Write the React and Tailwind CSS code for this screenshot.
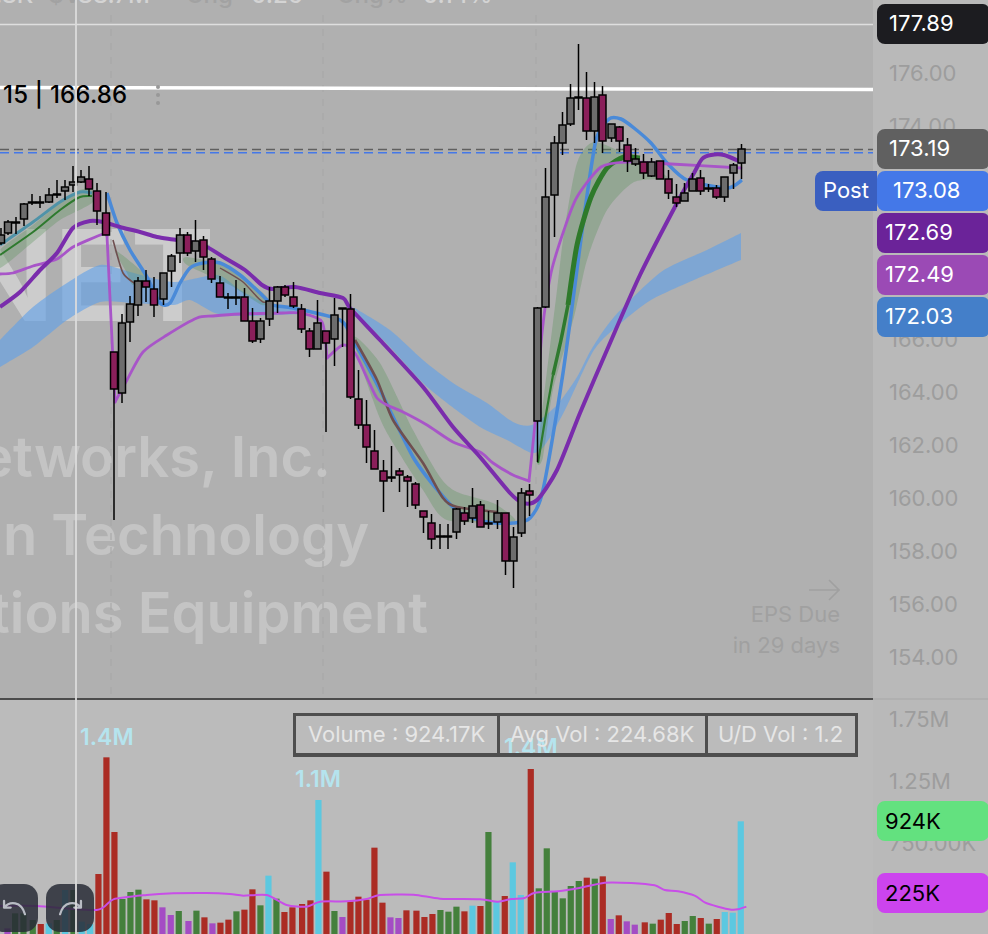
const font = { fontFamily: 'Inter, "Liberation Sans", sans-serif' }

const UP = '#6d6d6d'
const DOWN = '#8a1f5a'

// x, high, top, bottom, low, up?
const CANDLES = [
  [1,228,235,243,245,1],[8,220,222,233,235,1],[16,217,222,223,234,1],[24,203,204,219,226,1],[32,194,202,203,205,1],
  [40,196,202,203,208,1],[49,188,195,202,203,1],[57,180,194,195,198,1],[65,180,187,191,200,1],[73,166,182,185,192,1],
  [81,170,177,182,183,1],[89,166,179,189,196,0],[97,183,191,211,225,0],[106,192,213,235,235,0],[114,352,352,389,520,0],
  [122,314,323,393,403,1],[130,296,304,322,342,1],[138,277,281,305,316,1],[146,270,281,287,302,0],[154,277,289,305,317,0],
  [163.5,273,273,299,305,1],[171.5,254,256,271,287,1],[180,228,235,253,263,1],[187.5,232,235,253,256,0],[195.5,220,241,251,262,1],
  [203.5,236,240,257,270,0],[211.5,257,259,279,283,0],[220,276,283,297,297,0],[228,293,297,298,309,1],[236,280,297,298,305,1],
  [244.5,288,297,321,321,0],[252.5,308,321,341,343,0],[260.5,318,321,339,343,1],[269.5,287,301,319,326,1],[277.5,286,287,301,313,1],
  [285,285,287,295,297,0],[293.5,282,297,306,308,0],[301.5,304,309,329,333,0],[309.5,328,331,349,357,0],[317.5,300,323,349,349,1],
  [326,331,331,343,432,0],[334.5,298,315,339,366,1],[342.5,308,308,309,347,1],[350.5,294,309,397,399,0],[358.5,370,399,425,429,0],
  [366.5,400,425,447,463,0],[374.5,430,451,469,469,0],[383.5,460,471,481,512,0],[391.5,446,477,478,482,1],[399.5,468,471,475,492,0],
  [407.5,475,477,481,507,0],[415.5,482,484,505,509,0],[423.5,511,511,517,533,0],[431.5,514,523,539,549,0],[440,524,536,537,549,1],
  [448,524,536,537,549,1],[456.5,508,509,532,539,1],[464.5,507,513,521,525,0],[472.5,488,506,518,523,1],[480.5,501,505,527,527,0],
  [488.5,511,523,524,529,1],[497.5,500,513,522,529,1],[505.5,513,513,561,575,0],[513.5,527,537,561,588,1],[521.5,488,493,533,537,1],
  [529.5,484,491,495,516,0],[537.5,307,308,421,462,1],[545.5,168,197,307,308,1],[554.5,136,143,195,237,1],[562.5,112,125,143,155,1],
  [570.5,84,98,124,126,1],[578.5,44,97,98,110,1],[586.5,72,98,131,140,0],[594.5,82,97,131,143,1],[602.5,86,95,141,153,0],
  [611.5,124,124,138,142,1],[619.5,126,127,141,152,0],[627.5,138,145,161,172,0],[635.5,148,159,164,166,1],[643.5,154,162,173,179,0],
  [651.5,158,162,176,177,1],[660,161,161,179,179,0],[668.5,170,179,193,199,0],[676.5,184,197,203,207,0],[684.5,183,193,201,201,1],
  [692.5,173,179,191,191,1],[700.5,170,178,191,195,0],[708.5,184,188,189,192,1],[716.5,185,188,197,199,0],[724.5,177,177,197,202,1],
  [733.5,163,165,173,189,1],[741.5,144,149,163,179,1],
]

// catmull-rom through the points, kept tight so lines don't overshoot
const smooth = (a, closed = false) => {
  const at = i => closed ? a[(i + a.length) % a.length] : a[Math.max(0, Math.min(a.length - 1, i))]
  const n = closed ? a.length : a.length - 1
  let d = `M${a[0][0]},${a[0][1]}`
  for (let i = 0; i < n; i++) {
    const [p0, p1, p2, p3] = [at(i - 1), at(i), at(i + 1), at(i + 2)]
    const c1 = [p1[0] + (p2[0] - p0[0]) / 8, p1[1] + (p2[1] - p0[1]) / 8]
    const c2 = [p2[0] - (p3[0] - p1[0]) / 8, p2[1] - (p3[1] - p1[1]) / 8]
    d += ` C${c1[0]},${c1[1]} ${c2[0]},${c2[1]} ${p2[0]},${p2[1]}`
  }
  return closed ? d + ' Z' : d
}
// two smooth edges joined with hard corners
const band = (top, bot) => smooth(top) + ' L' + smooth(bot).slice(1) + ' Z'

const DARK_PURPLE = [[0,307],[20,292],[40,270],[57,253],[73,228],[90,221],[103,222],[120,227],[140,232],[157,237],[177,240],[203,245],[225,258],[245,270],[262,285],[272,289],[295,287],[320,293],[343,298],[350,308],[380,340],[423,387],[453,427],[480,457],[510,493],[523,503],[537,500],[557,470],[580,413],[607,350],[640,275],[677,203],[694,173],[702,159],[711,155],[724,155],[741,162]]
const LIGHT_PURPLE = [
  [[0,274],[13,273],[33,266],[57,259],[73,247],[103,234],[107,236]],
  [[107,236],[115,402]],
  [[115,402],[127,380],[143,352],[167,335],[197,318],[213,316],[240,314],[283,313],[300,313],[322,322],[327,358]],
  [[327,358],[343,345],[355,353],[368,380],[377,398],[387,405],[403,412],[427,425],[453,442],[480,452],[493,463],[513,475],[529,481]],
  [[529,481],[535,423],[542,333],[551,273],[564,230],[577,197],[601,167],[627,162],[671,164],[741,168]],
]
const BLUE_A = [[107,193],[117,223],[130,250],[147,277],[160,303],[170,303],[180,283],[190,268],[203,263],[220,263],[240,275],[260,293],[273,305],[293,308],[340,320],[353,340],[380,390],[413,457],[440,493],[460,513],[487,522],[513,523],[530,518],[543,490],[563,373],[584,217],[596,140],[609,119],[621,119],[634,128],[651,143],[667,163],[687,180],[727,188],[742,180]]
const BLUE_LEFT = [[0,245],[33,222],[60,202],[80,192],[92,193]]
const GREEN_LEFT = [[0,255],[33,232],[60,210],[80,197],[92,196]]
const GREEN_THIN = [[538,463],[545,420],[553,375]]
const GREEN_MID = [[553,375],[561,340],[568,305]]
const GREEN_THICK = [[568,305],[577,245],[591,197],[607,168],[624,157],[640,158]]
const BROWN_A = [[355,340],[377,380],[393,420],[423,463],[443,498],[457,507],[497,512]]
const BROWN_B = [[113,240],[123,273],[137,285]]
const BROWN_C = [[220,268],[243,282],[263,302],[280,298]]

const BLUE_WIDE = band(
  [[353,307],[390,330],[423,360],[453,383],[487,403],[513,422],[532,425],[557,405],[577,377],[591,350],[614,317],[661,272],[707,250],[741,233]],
  [[741,260],[694,280],[651,300],[621,323],[594,350],[565,410],[545,445],[532,453],[507,440],[480,427],[447,403],[423,383],[390,347],[363,320]],
)
const BLUE_LEFT_BAND = band(
  [[0,340],[33,307],[67,283],[100,265],[130,272],[173,282],[217,275],[240,290],[270,305],[300,308]],
  [[300,314],[240,316],[215,313],[190,300],[173,305],[133,303],[100,302],[67,320],[33,347],[0,367]],
)
const BANDS_GREEN = [
  [[0,250],[33,225],[60,203],[80,190],[92,190],[92,203],[60,220],[33,242],[0,268]],
  [[115,250],[147,277],[133,285],[127,273]],
  [[187,257],[230,268],[267,297],[262,305],[230,285],[187,265]],
  [[353,337],[380,363],[413,430],[440,477],[457,492],[493,503],[513,517],[510,522],[447,520],[423,490],[387,433],[373,400]],
  [[537,463],[540,430],[557,290],[564,233],[577,163],[594,142],[627,155],[667,177],[634,182],[607,210],[587,260],[574,317],[553,390],[543,457]],
]

// zoom x, zoom top, colour (picture coords times 3)
const R = '#ab2c24', G = '#44803c', P = '#a44cc4', C = '#5cc8e0'
const VOLS = [
  [22,685,P],[45,640,G],[70,640,G],[98,660,G],[122,672,R],[146,670,C],[170,660,G],[195,570,C],[220,570,G],[245,665,C],[270,672,C],
  [295,522,R],[319,172,R],[343,396,R],[367,597,G],[391,576,G],[415,569,G],[439,598,R],[463,601,R],[487,622,P],[512,645,P],[536,633,G],
  [565,663,P],[589,632,G],[613,652,R],[637,670,P],[661,668,R],[685,659,R],[709,634,G],[733,629,R],[757,568,R],[781,616,G],[805,527,C],
  [829,596,G],[853,636,R],[877,622,R],[906,612,R],[931,601,R],[955,300,C],[979,515,R],[1003,633,G],[1027,651,P],[1051,604,R],[1075,590,R],
  [1099,599,R],[1123,443,R],[1147,608,R],[1171,652,P],[1195,654,P],[1219,631,R],[1249,632,R],[1273,651,R],[1297,642,R],[1321,630,G],
  [1345,635,G],[1369,620,G],[1393,634,R],[1417,617,C],[1441,618,R],[1465,396,G],[1489,605,C],[1514,588,R],[1538,487,C],[1562,585,C],
  [1592,207,R],[1616,565,G],[1640,445,G],[1664,575,G],[1688,595,G],[1712,558,G],[1736,543,G],[1760,533,R],[1784,536,G],[1808,529,R],
  [1832,657,P],[1856,646,R],[1880,664,P],[1904,674,P],[1934,667,R],[1958,671,G],[1982,659,R],[2006,639,R],[2030,672,R],[2054,663,G],
  [2078,648,G],[2102,654,R],[2126,671,G],[2150,657,R],[2174,636,C],[2198,638,C],[2222,364,C],
]
const AVG = [[0,618],[110,618],[290,630],[340,598],[440,585],[520,580],[620,579],[690,582],[730,587],[800,585],[860,615],[920,620],[960,605],[1040,604],[1100,597],[1140,585],[1240,584],[1320,596],[1440,598],[1494,605],[1534,597],[1574,594],[1604,578],[1674,574],[1734,565],[1814,548],[1894,549],[1964,556],[1994,570],[2034,574],[2084,587],[2114,607],[2154,620],[2194,629],[2214,628],[2239,620]]

const TICKS = ['176.00','174.00','172.00','170.00','168.00','166.00','164.00','162.00','160.00','158.00','156.00','154.00']

function PriceTag({ top, bg, pad = 'pl-3', children }) {
  return (
    <div className={`absolute left-[4px] w-[112px] h-10 rounded-l-lg rounded-r-md flex items-center text-white pb-[1px] ${pad}`} style={{ top, background: bg }}>
      {children}
    </div>
  )
}

function ChartSvg() {
  return (
    <svg className="absolute inset-0" width="873" height="699" viewBox="0 0 873 699" fill="none">
      {[111, 323, 536].map(x => (
        <line key={x} x1={x} y1="15" x2={x} y2="699" stroke="#a8a8a8" strokeOpacity=".75" strokeWidth="1.5" strokeDasharray="7 7" />
      ))}
      <line x1="0" y1="24.5" x2="873" y2="24.5" stroke="#dedede" strokeWidth="1.5" />
      <line x1="0" y1="87.5" x2="873" y2="89.5" stroke="#ffffff" strokeWidth="3.5" />
      <line x1="0" y1="149.5" x2="873" y2="149.5" stroke="#5f5f5f" strokeWidth="1.6" strokeDasharray="9 5" />
      <line x1="0" y1="152.7" x2="873" y2="152.7" stroke="#4478e8" strokeWidth="1.6" strokeDasharray="9 5" />

      <path d={BLUE_LEFT_BAND} fill="#5f9fe8" fillOpacity=".62" />
      <path d={BLUE_WIDE} fill="#5f9fe8" fillOpacity=".62" />
      {BANDS_GREEN.map((b, i) => <path key={i} d={smooth(b, true)} fill="#4f8f4f" fillOpacity=".3" />)}

      <path d={smooth(GREEN_LEFT)} stroke="#2e7a2e" strokeWidth="2" />
      <path d={smooth(BLUE_LEFT)} stroke="#4f93a8" strokeWidth="3" />
      <path d={smooth(BLUE_A)} stroke="#4a8ad8" strokeWidth="3.5" />
      <path d={smooth(GREEN_THIN)} stroke="#2e7a2e" strokeWidth="2.2" />
      <path d={smooth(GREEN_MID)} stroke="#2e7a2e" strokeWidth="3.5" />
      <path d={smooth(GREEN_THICK)} stroke="#2e7a2a" strokeWidth="5" />
      <path d={smooth(BROWN_A)} stroke="#6f4f50" strokeWidth="2.6" />
      <path d={smooth(BROWN_B)} stroke="#6f4f50" strokeWidth="1.6" />
      <path d={smooth(BROWN_C)} stroke="#6f4f50" strokeWidth="1.4" />
      {LIGHT_PURPLE.map((s, i) => <path key={i} d={smooth(s)} stroke="#a855c8" strokeWidth="2.8" strokeLinecap="round" />)}
      <path d={smooth(DARK_PURPLE)} stroke="#7a2cac" strokeWidth="4" />

      {CANDLES.map(([x, hi, top, bot, lo, up]) => (
        <g key={x}>
          <line x1={x} y1={hi} x2={x} y2={lo} stroke="#000" strokeWidth="1.5" />
          <rect x={x - 3.5} y={top} width="7" height={Math.max(bot - top, 1)} fill={up ? UP : DOWN} stroke="#000" strokeWidth="1.5" />
        </g>
      ))}
    </svg>
  )
}

function VolumeSvg() {
  return (
    <svg className="absolute inset-0" width="873" height="234" viewBox="0 700 873 234" fill="none">
      {VOLS.map(([x, t, c]) => (
        <rect key={x} x={x / 3 - 3} y={700 + t / 3} width="6.2" height={234 - t / 3} fill={c} />
      ))}
      <path d={smooth(AVG.map(([x, y]) => [x / 3, 700 + y / 3]))} stroke="#c84ee8" strokeWidth="2" />
    </svg>
  )
}

export default function App() {
  return (
    <div className="relative flex w-[988px] h-[934px] overflow-hidden text-[22px] bg-[#bbbbbb]" style={font}>
      {/* panes */}
      <div className="flex flex-col w-[873px] shrink-0">
        <div className="relative h-[700px] bg-[#b0b0b0] border-b-2 border-[#4c4c4c] overflow-hidden">
          {/* watermark */}
          <div className="absolute top-[190px] left-[-42px] text-[126px] leading-[170px] font-bold text-[#d4d4d4] opacity-80">NET</div>
          <div className="absolute top-[418px] left-0 flex flex-col font-semibold text-[56px] leading-[78px] text-[#c4c4c4] whitespace-nowrap">
            <span className="ml-[-20px]">etworks, Inc.</span>
            <span className="ml-[3px]">n Technology</span>
            <span className="ml-[-10px]">tions Equipment</span>
          </div>

          <ChartSvg />

          <div className="absolute top-[-23px] left-0 flex items-baseline whitespace-nowrap text-[24px] font-medium text-[#d4d4d4]">
            <span className="ml-[-5px]">.8K</span>
            <span className="ml-[15px] text-[#a2a2a2]">$V</span>
            <span className="ml-[-3px]">88.7M</span>
            <span className="ml-[36px] text-[#a2a2a2]">Chg</span>
            <span className="ml-[2px]">+0.26</span>
            <span className="ml-[34px] text-[#a2a2a2]">Chg%</span>
            <span className="ml-[-1px]">+0.14%</span>
          </div>

          <div className="absolute top-[81px] left-[3px] flex items-center h-7 text-[24px] text-black font-medium tracking-[.2px]">15 | 166.86</div>
          <div className="absolute top-[85px] left-[156px] flex flex-col gap-[4px]">
            <span className="w-1 h-1 rounded-full bg-[#989898]" />
            <span className="w-1 h-1 rounded-full bg-[#989898]" />
            <span className="w-1 h-1 rounded-full bg-[#989898]" />
          </div>

          <div className="absolute top-[578px] right-[33px] flex flex-col items-end text-[#a0a0a0] leading-[31px]">
            <svg width="32" height="24" viewBox="0 0 32 24" fill="none" stroke="#a0a0a0" strokeWidth="1.6">
              <path d="M1 12 H31 M21 2 L31 12 L21 22" />
            </svg>
            <span className="mt-[-3px]">EPS Due</span>
            <span>in 29 days</span>
          </div>
        </div>

        <div className="relative flex-1 bg-[#bbbbbb] overflow-hidden">
          <VolumeSvg />
          <span className="absolute top-[20px] left-[80px] font-semibold text-[23px] text-[#b5e4ee]">1.4M</span>
          <span className="absolute top-[62px] left-[295px] font-semibold text-[23px] text-[#b5e4ee]">1.1M</span>
          <span className="absolute top-[30px] left-[504px] font-semibold text-[23px] text-[#b5e4ee]">1.4M</span>

          <div className="absolute top-[13px] left-[293px] flex h-[44px] border-[3px] border-b-4 border-[#4e4e4e] text-[#e6e6e6] whitespace-nowrap">
            <div className="flex items-center w-[201px] pl-[12px]">Volume : 924.17K</div>
            <div className="flex items-center w-[208px] pl-[10px] border-l-[3px] border-[#4e4e4e]">Avg Vol : 224.68K</div>
            <div className="flex items-center w-[150px] pl-[10px] border-l-[3px] border-[#4e4e4e]">U/D Vol : 1.2</div>
          </div>

          <div className="absolute top-[184px] left-[-10px] flex gap-2">
            <button className="w-12 h-12 rounded-[14px] bg-[#282c36]/85 flex items-center justify-center text-[#b8bcc4]">
              <svg width="25" height="19" viewBox="0 0 26 20" fill="none" stroke="currentColor" strokeWidth="2.4" strokeLinecap="round" strokeLinejoin="round">
                <path d="M2 9 C8 2 20 2 24 16 M2 2 V9 H9" />
              </svg>
            </button>
            <button className="w-12 h-12 rounded-[14px] bg-[#282c36]/85 flex items-center justify-center text-[#b8bcc4]">
              <svg width="25" height="19" viewBox="0 0 26 20" fill="none" stroke="currentColor" strokeWidth="2.4" strokeLinecap="round" strokeLinejoin="round">
                <path d="M24 9 C18 2 6 2 2 16 M24 2 V9 H17" />
              </svg>
            </button>
          </div>
        </div>
      </div>

      {/* axis */}
      <div className="relative flex-1 bg-[#b9b9b9] text-[#9d9d9d]">
        <div className="flex flex-col h-[700px] pt-[47px] border-b-2 border-[#b0b0b0]">
          {TICKS.map(t => <div key={t} className="flex items-center h-[53.1px] pl-[16px]">{t}</div>)}
        </div>
        <div className="flex flex-col">
          {['1.75M', '1.25M', '750.00K', '250.00K'].map(t => <div key={t} className="flex items-center h-[62px] pl-[16px] first:mt-[-12px]">{t}</div>)}
        </div>

        <PriceTag top={4} bg="#1c1c20">177.89</PriceTag>
        <PriceTag top={129} bg="#606060">173.19</PriceTag>
        <div className="absolute top-[171px] right-[111px] w-[62px] h-10 rounded-l-lg bg-[#3a5fc0] text-white flex items-center pl-[8px] pb-[1px]">Post</div>
        <PriceTag top={171} bg="#4478e8" pad="pl-4">173.08</PriceTag>
        <PriceTag top={213} bg="#6b2399" pad="pl-2">172.69</PriceTag>
        <PriceTag top={255} bg="#9b4ab5" pad="pl-2">172.49</PriceTag>
        <PriceTag top={297} bg="#447fc9" pad="pl-2">172.03</PriceTag>
        <div className="absolute top-[801px] left-[4px] w-[112px] h-10 rounded-lg bg-[#63e17f] text-black flex items-center pl-2">924K</div>
        <div className="absolute top-[873px] left-[4px] w-[112px] h-10 rounded-lg bg-[#cc44ee] text-black flex items-center pl-2">225K</div>
      </div>

      {/* crosshair */}
      <div className="absolute top-0 bottom-0 left-[75px] w-[2px] bg-[#dcdcdc]/90 pointer-events-none" />
    </div>
  )
}
